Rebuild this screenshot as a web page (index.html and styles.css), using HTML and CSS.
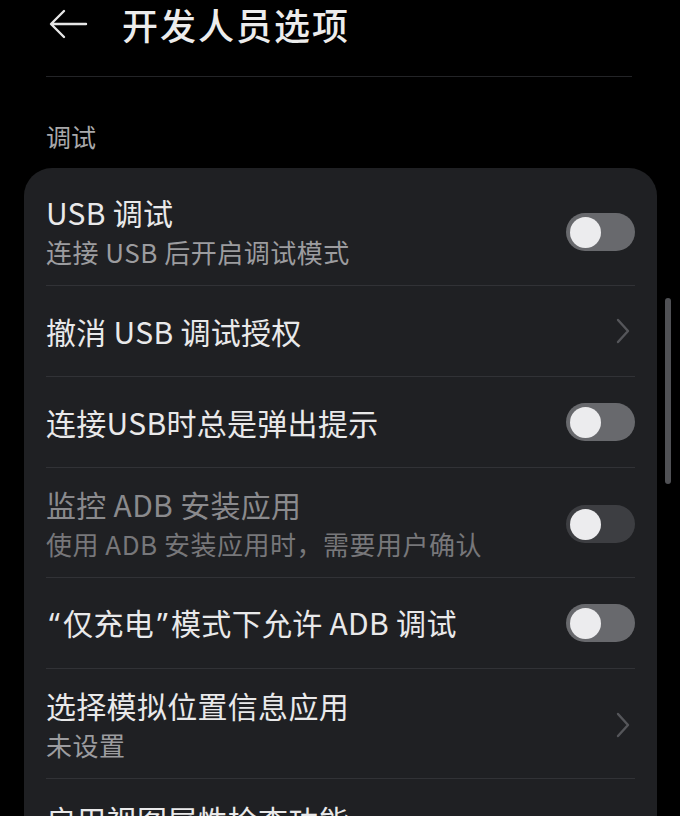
FILE: index.html
```html
<!DOCTYPE html>
<html lang="zh-CN">
<head>
<meta charset="utf-8">
<title>开发人员选项</title>
<link rel="stylesheet" href="styles.css">
</head>
<body>
<div class="page">
  <header class="appbar">
    <svg class="back" width="40" height="32" viewBox="0 0 40 32" aria-hidden="true">
      <path d="M38 16 H4 M16 3 L3 16 L16 29" fill="none" stroke="#e6e6e6" stroke-width="2.4" stroke-linecap="round" stroke-linejoin="round"/>
    </svg>
    <h1 class="title">开发人员选项</h1>
  </header>
  <div class="rule"></div>
  <div class="section-label">调试</div>
  <section class="card">
    <div class="row two first">
      <div class="text">
        <div class="r-title">USB 调试</div>
        <div class="r-sub">连接 USB 后开启调试模式</div>
      </div>
      <span class="toggle"><span class="knob"></span></span>
    </div>
    <div class="row one">
      <div class="text"><div class="r-title">撤消 USB 调试授权</div></div>
      <svg class="chev" width="16" height="28" viewBox="0 0 16 28" aria-hidden="true"><path d="M3 3 L13 14 L3 25" fill="none" stroke="#55565a" stroke-width="2.4" stroke-linecap="round" stroke-linejoin="round"/></svg>
    </div>
    <div class="row one">
      <div class="text"><div class="r-title">连接USB时总是弹出提示</div></div>
      <span class="toggle"><span class="knob"></span></span>
    </div>
    <div class="row two disabled">
      <div class="text">
        <div class="r-title">监控 ADB 安装应用</div>
        <div class="r-sub">使用 ADB 安装应用时，需要用户确认</div>
      </div>
      <span class="toggle dim"><span class="knob"></span></span>
    </div>
    <div class="row one">
      <div class="text"><div class="r-title"><span class="q">“</span>仅充电<span class="q">”</span>模式下允许 ADB 调试</div></div>
      <span class="toggle"><span class="knob"></span></span>
    </div>
    <div class="row two">
      <div class="text">
        <div class="r-title">选择模拟位置信息应用</div>
        <div class="r-sub">未设置</div>
      </div>
      <svg class="chev" width="16" height="28" viewBox="0 0 16 28" aria-hidden="true"><path d="M3 3 L13 14 L3 25" fill="none" stroke="#55565a" stroke-width="2.4" stroke-linecap="round" stroke-linejoin="round"/></svg>
    </div>
    <div class="row two last">
      <div class="text">
        <div class="r-title">启用视图属性检查功能</div>
        <div class="r-sub">&nbsp;</div>
      </div>
      <span class="toggle"><span class="knob"></span></span>
    </div>
  </section>
  <div class="scrollbar"></div>
</div>
</body>
</html>
```
FILE: styles.css
```css
html, body {
  margin: 0;
  padding: 0;
  background: #000;
}
body {
  font-family: "Noto Sans CJK SC", "Noto Sans", sans-serif;
  color: #e8e8e8;
  overflow: hidden;
  height: 816px;
}
.page {
  position: relative;
  width: 680px;
  height: 816px;
  overflow: hidden;
}
.appbar {
  display: flex;
  align-items: center;
  height: 48px;
  padding-left: 48px;
}
.back {
  display: block;
  flex: none;
}
.title {
  margin: 0 0 0 34px;
  font-size: 36px;
  font-weight: 500;
  line-height: 48px;
  color: #ececec;
  letter-spacing: 2px;
}
.rule {
  height: 1px;
  background: #232427;
  margin: 28px 48px 0 46px;
}
.section-label {
  padding: 41px 0 0 46px;
  font-size: 25px;
  line-height: 36px;
  color: #a9a9ab;
}
.card {
  margin: 14px 23px 0 24px;
  background: #1f2023;
  border-radius: 28px;
  padding: 8px 22px 0 22px;
}
.row {
  display: flex;
  align-items: center;
  border-top: 1px solid #313236;
}
.row.first {
  border-top: none;
}
.row.one {
  height: 90px;
}
.row.two {
  padding: 16px 0 13px;
  min-height: 80px;
}
.row.last {
  padding-top: 20px;
}
.text {
  flex: 1;
  min-width: 0;
}
.r-title {
  font-size: 30px;
  line-height: 40px;
  color: #e9e9ea;
  white-space: nowrap;
  letter-spacing: 0.3px;
}
.r-sub {
  font-size: 26px;
  line-height: 40px;
  color: #9c9c9f;
  white-space: nowrap;
  letter-spacing: 0.5px;
}
.q {
  font-family: "Noto Sans", sans-serif;
  padding: 0 3px;
}
.disabled .r-title {
  color: #8a8a8d;
}
.disabled .r-sub {
  color: #77777a;
}
.toggle {
  flex: none;
  width: 69px;
  height: 38px;
  border-radius: 19px;
  background: #68696d;
  display: flex;
  align-items: center;
  padding-left: 4px;
  box-sizing: border-box;
}
.toggle.dim {
  background: #3d3e42;
}
.knob {
  width: 31px;
  height: 31px;
  border-radius: 50%;
  background: #ececee;
}
.chev {
  flex: none;
  margin-right: 4px;
  display: block;
}
.scrollbar {
  position: absolute;
  left: 665px;
  top: 298px;
  width: 6px;
  height: 186px;
  border-radius: 3px;
  background: #505155;
}
```
